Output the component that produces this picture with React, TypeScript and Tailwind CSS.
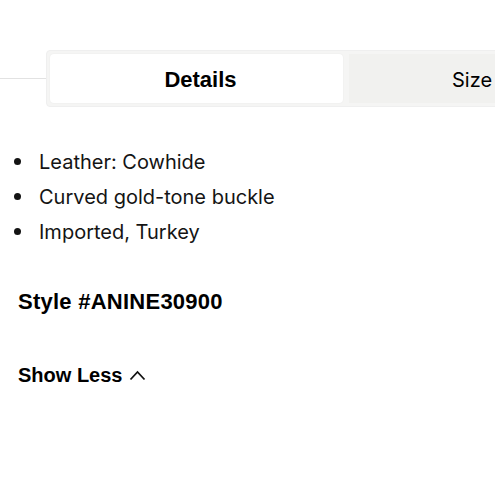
import React from "react";

export default function App() {
  return (
    <div className="w-[495px] h-[495px] overflow-hidden bg-white text-black">
      <div className="pt-[50px] flex items-center">
        <div className="w-[46px] shrink-0 h-px bg-[#e2e2e2]" />
        <div className="flex shrink-0 p-[3px] bg-[#f5f5f4] rounded-[4px] border border-[#efefef]">
          <div className="w-[293px] h-[49px] bg-white rounded-[4px] shadow-[0_0_2px_rgba(0,0,0,0.06)] flex items-center justify-center pt-[2px] pl-[8px] font-['Liberation_Sans',sans-serif] font-bold text-[22px]">
            Details
          </div>
          <div className="w-[248px] h-[49px] ml-[6px] bg-[#f1f1ef] flex items-center justify-center pt-[2px] pr-[2px] font-['Inter',sans-serif] text-[20px]">
            Size
          </div>
        </div>
      </div>
      <ul className="mt-[37px] font-['Inter',sans-serif] text-[20px] text-[#141414]">
        {["Leather: Cowhide", "Curved gold-tone buckle", "Imported, Turkey"].map((t) => (
          <li key={t} className="flex items-center h-[35px]">
            <span className="w-[7px] h-[7px] rounded-full bg-[#141414] ml-[14px] mr-[18px]" />
            {t}
          </li>
        ))}
      </ul>
      <div className="mt-[41px] ml-[18px] font-['Liberation_Sans',sans-serif] font-bold text-[22px] tracking-[0.25px] leading-[24px]">
        Style #ANINE30900
      </div>
      <div className="mt-[49px] ml-[18px] flex items-center font-['Liberation_Sans',sans-serif] font-bold text-[20px] leading-[24px]">
        Show Less
        <svg className="ml-[7px]" width="17" height="11" viewBox="0 0 17 11" fill="none">
          <path d="M1.5 9.5 L8.5 2 L15.5 9.5" stroke="#111" strokeWidth="1.8" />
        </svg>
      </div>
    </div>
  );
}
